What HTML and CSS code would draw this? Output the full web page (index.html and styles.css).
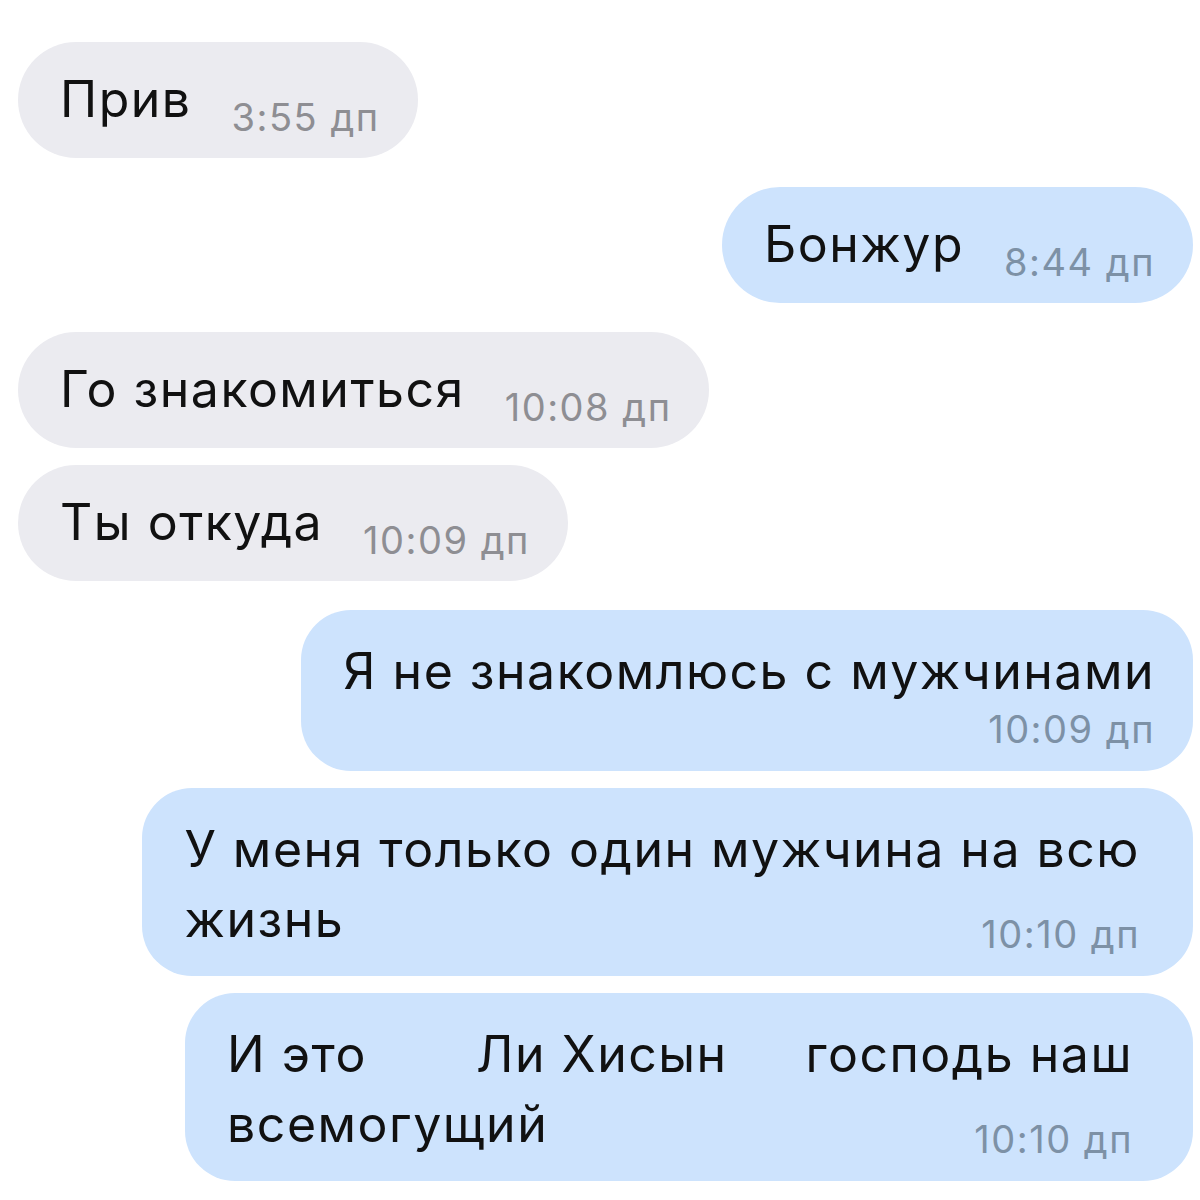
FILE: index.html
```html
<!DOCTYPE html>
<html lang="ru">
<head>
  <meta charset="UTF-8">
  <title>Чат</title>
  <link rel="stylesheet" href="styles.css">
</head>
<body>
  <div class="chat">
    <div class="bubble in">
      <span class="text">Прив</span><span class="time">3:55 дп</span>
    </div>

    <div class="bubble out switch">
      <span class="text">Бонжур</span><span class="time">8:44 дп</span>
    </div>

    <div class="bubble in switch">
      <span class="text">Го знакомиться</span><span class="time">10:08 дп</span>
    </div>
    <div class="bubble in">
      <span class="text">Ты откуда</span><span class="time">10:09 дп</span>
    </div>

    <div class="bubble out switch multi">
      <div class="text">Я не знакомлюсь с мужчинами</div>
      <div class="time">10:09 дп</div>
    </div>
    <div class="bubble out multi wide">
      <div class="text">У меня только один мужчина на всю<br>жизнь</div>
      <div class="time overlap">10:10 дп</div>
    </div>
    <div class="bubble out multi wider">
      <div class="text spaced">И это       Ли Хисын     господь наш<br>всемогущий</div>
      <div class="time overlap">10:10 дп</div>
    </div>
  </div>
</body>
</html>
```

FILE: styles.css
```css
body {
  margin: 0;
  background: #fff;
  font-family: Inter, "DejaVu Sans", sans-serif;
  color: #111;
}
.chat {
  display: flex;
  flex-direction: column;
  padding: 42px 7px 0 18px;
}
.bubble {
  width: fit-content;
  padding: 22px 38px 22px 42px;
  border-radius: 58px;
  margin-top: 17px;
}
.bubble:first-child {
  margin-top: 0;
}
.bubble.switch {
  margin-top: 29px;
}
.in {
  align-self: flex-start;
  background: #ebebf0;
}
.out {
  align-self: flex-end;
  background: #cde3fd;
}
.text {
  font-size: 50px;
  line-height: 70px;
  letter-spacing: 1.5px;
}
.time {
  font-size: 38px;
  line-height: 1;
  letter-spacing: 1.5px;
  margin-left: 40px;
  vertical-align: -14px;
  color: #8e8e93;
}
.out .time {
  color: #7d91a6;
}
.multi {
  display: flex;
  flex-direction: column;
  padding: 26px 38px 22px 42px;
  border-radius: 50px;
}
.multi .time {
  align-self: flex-end;
  line-height: 40px;
  margin-left: 0;
  margin-top: 3px;
}
.multi .time.overlap {
  margin-top: -40px;
}
.spaced {
  white-space: pre;
}
.wide {
  padding-right: 53px;
}
.wider {
  padding-right: 60px;
}
```
